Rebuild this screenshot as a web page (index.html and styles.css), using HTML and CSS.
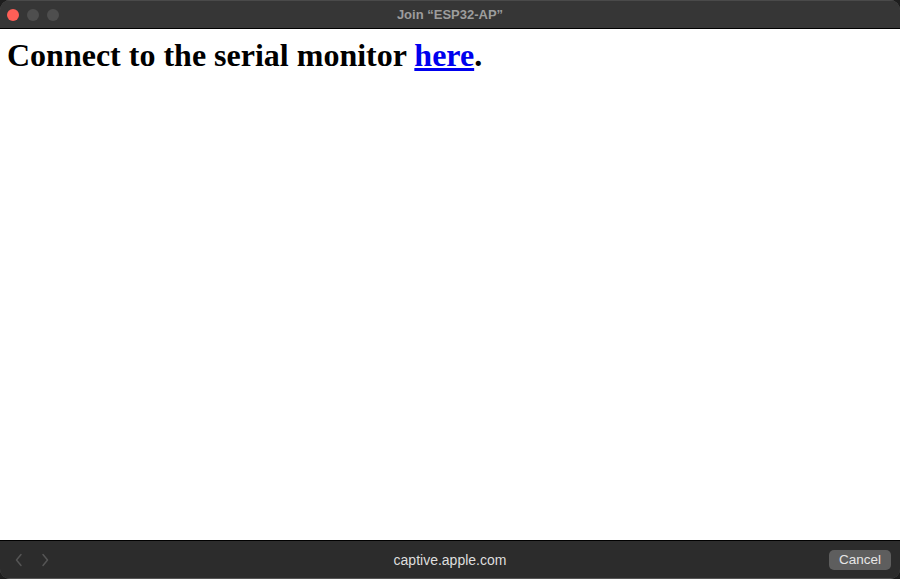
FILE: index.html
```html
<!DOCTYPE html>
<html>
<head>
<meta charset="utf-8">
<link rel="stylesheet" href="styles.css">
</head>
<body>
<div class="window">
  <div class="titlebar">
    <div class="lights">
      <span class="light red"></span>
      <span class="light gray"></span>
      <span class="light gray"></span>
    </div>
    <div class="title">Join “ESP32-AP”</div>
  </div>
  <div class="content">
    <h1>Connect to the serial monitor <a href="#">here</a>.</h1>
  </div>
  <div class="bottombar">
    <div class="nav">
      <svg width="10" height="14" viewBox="0 0 10 14"><path d="M7 1.5 L2.5 7 L7 12.5" fill="none" stroke="#555" stroke-width="1.5" stroke-linecap="round" stroke-linejoin="round"/></svg>
      <svg width="10" height="14" viewBox="0 0 10 14"><path d="M3 1.5 L7.5 7 L3 12.5" fill="none" stroke="#555" stroke-width="1.5" stroke-linecap="round" stroke-linejoin="round"/></svg>
    </div>
    <div class="url">captive.apple.com</div>
    <div class="actions"><button class="cancel">Cancel</button></div>
  </div>
</div>
</body>
</html>
```
FILE: styles.css
```css
html, body {
  margin: 0;
  padding: 0;
  background: #1e1e1e;
}
.window {
  width: 900px;
  height: 579px;
  box-sizing: border-box;
  display: flex;
  flex-direction: column;
  border-radius: 10px;
  overflow: hidden;
  background: #363636;
  box-shadow: inset 0 0 0 1px #555;
}
.titlebar {
  flex: none;
  display: grid;
  grid-template-columns: 1fr auto 1fr;
  align-items: center;
  background: #363636;
  border-top: 1px solid #4a4a4a;
  box-sizing: border-box;
  border-bottom: 1px solid #000;
  height: 29px;
}
.lights {
  display: flex;
  gap: 8px;
  padding-left: 7px;
}
.light {
  width: 12px;
  height: 12px;
  border-radius: 50%;
  background: #4e4e4e;
}
.light.red { background: #fe5f57; }
.title {
  font-family: "Liberation Sans", Arial, sans-serif;
  font-weight: bold;
  font-size: 13px;
  color: #9d9d9d;
  padding-bottom: 1px;
}
.content {
  flex: 1;
  background: #fff;
  padding: 8px 8px 0 7px;
}
h1 {
  margin: 0;
  font-family: "Liberation Serif", "Times New Roman", serif;
  font-size: 32px;
  font-weight: bold;
  color: #000;
}
h1 a { color: #0000ee; }
.bottombar {
  height: 39px;
  flex: none;
  box-sizing: border-box;
  border-top: 1px solid #000;
  background: #2c2c2c;
  display: grid;
  grid-template-columns: 1fr auto 1fr;
  align-items: center;
  border-bottom: 1px solid #555;
}
.nav {
  display: flex;
  gap: 16px;
  padding-left: 14px;
  padding-top: 1px;
}
.url {
  font-family: "Liberation Sans", Arial, sans-serif;
  font-size: 14px;
  color: #dedede;
}
.actions {
  display: flex;
  justify-content: flex-end;
  padding-right: 9px;
}
.cancel {
  font-family: "Liberation Sans", Arial, sans-serif;
  font-size: 13.5px;
  color: #e6e6e6;
  background: #5e5e5e;
  border: none;
  border-radius: 5px;
  height: 20px;
  padding: 0 10px;
  line-height: 20px;
}
```
